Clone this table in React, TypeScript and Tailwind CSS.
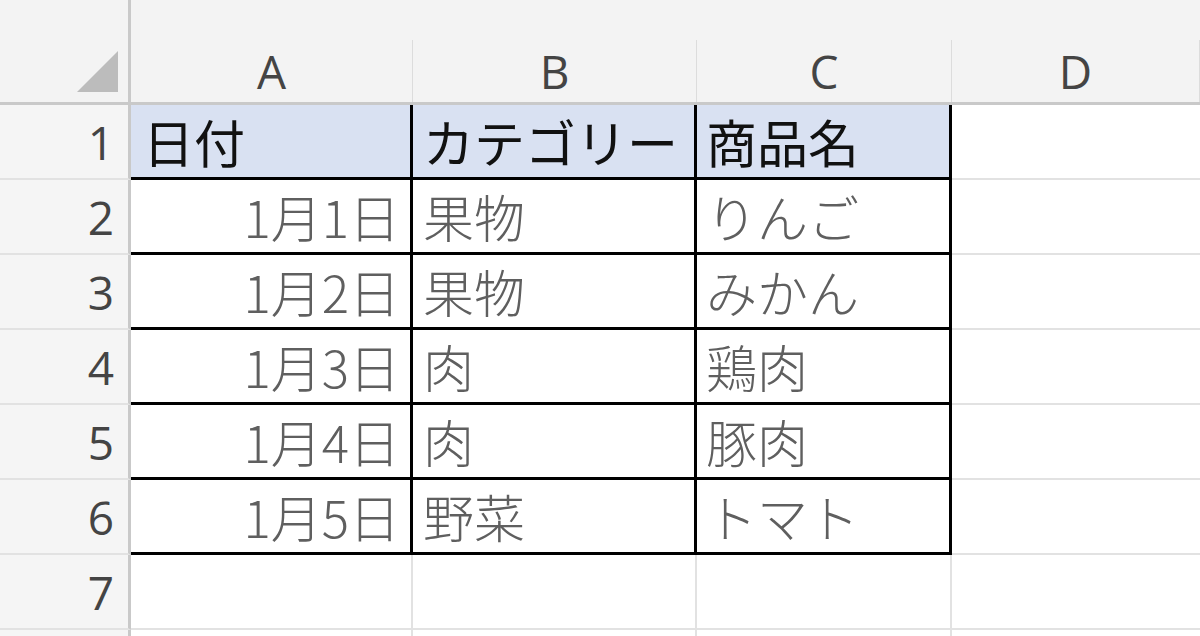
import React from 'react';

const rows = [
  { n: '1', a: '日付', b: 'カテゴリー', c: '商品名', head: true },
  { n: '2', a: '1月1日', b: '果物', c: 'りんご' },
  { n: '3', a: '1月2日', b: '果物', c: 'みかん' },
  { n: '4', a: '1月3日', b: '肉', c: '鶏肉' },
  { n: '5', a: '1月4日', b: '肉', c: '豚肉' },
  { n: '6', a: '1月5日', b: '野菜', c: 'トマト' },
];

const cjk = "font-['Noto_Sans_CJK_JP','Noto_Sans',sans-serif]";
const ui = "font-['Open_Sans','Noto_Sans',sans-serif]";

const App: React.FC = () => {
  return (
    <div className="w-[1200px] h-[636px] overflow-hidden bg-white flex flex-col">
      {/* column headers */}
      <div className="h-[105px] flex shrink-0 bg-[#f3f3f3] border-b-[3px] border-[#c9c9c9]">
        <div className="w-[131px] shrink-0 border-r-[3px] border-[#c9c9c9] flex items-end justify-end pr-[10px] pb-[10px]">
          <svg width="41" height="41" viewBox="0 0 41 41">
            <polygon points="41,0 41,41 0,41" fill="#bcbcbc" />
          </svg>
        </div>
        {[
          { l: 'A', w: 'w-[282px]' },
          { l: 'B', w: 'w-[284px]' },
          { l: 'C', w: 'w-[255px]' },
          { l: 'D', w: 'flex-1' },
        ].map((c) => (
          <div key={c.l} className={`${c.w} shrink-0 flex flex-col`}>
            <div className="h-[40px]" />
            <div
              className={`flex-1 flex items-center justify-center border-r border-[#dcdcdc] text-[46px] leading-none text-[#444] ${ui}`}
            >
              {c.l}
            </div>
          </div>
        ))}
      </div>

      {rows.map((r) => {
        const fill = r.head ? 'bg-[#d9e1f2] text-[#111] font-normal' : 'bg-white text-[#5f5f5f] font-light';
        return (
          <div key={r.n} className="h-[75px] flex shrink-0">
            <div
              className={`w-[131px] shrink-0 bg-[#f5f5f5] border-r-[3px] border-b-2 border-r-[#c9c9c9] border-b-[#e2e2e2] flex items-center justify-end pr-[14px] text-[46px] leading-none text-[#444] ${ui}`}
            >
              {r.n}
            </div>
            <div
              className={`w-[282px] shrink-0 border-r-[3px] border-b-[3px] border-black flex items-center text-[51px] leading-none ${fill} ${cjk} ${
                r.head ? 'justify-start pl-[12px]' : 'justify-end pr-[10px]'
              }`}
            >
              {r.a}
            </div>
            <div
              className={`w-[284px] shrink-0 border-r-[3px] border-b-[3px] border-black flex items-center pl-[10px] text-[51px] leading-none ${fill} ${cjk}`}
            >
              {r.b}
            </div>
            <div
              className={`w-[255px] shrink-0 border-r-[3px] border-b-[3px] border-black flex items-center pl-[9px] text-[51px] leading-none ${fill} ${cjk}`}
            >
              {r.c}
            </div>
            <div className="flex-1 border-b-2 border-[#e2e2e2]" />
          </div>
        );
      })}

      {['7', ''].map((n, i) => (
        <div key={i} className="h-[75px] flex shrink-0">
          <div
            className={`w-[131px] shrink-0 bg-[#f5f5f5] border-r-[3px] border-b-2 border-r-[#c9c9c9] border-b-[#e2e2e2] flex items-center justify-end pr-[14px] text-[46px] leading-none text-[#444] ${ui}`}
          >
            {n}
          </div>
          <div className="w-[282px] shrink-0 border-r-2 border-b-2 border-[#e2e2e2]" />
          <div className="w-[284px] shrink-0 border-r-2 border-b-2 border-[#e2e2e2]" />
          <div className="w-[255px] shrink-0 border-r-2 border-b-2 border-[#e2e2e2]" />
          <div className="flex-1 border-b-2 border-[#e2e2e2]" />
        </div>
      ))}
    </div>
  );
};

export default App;
